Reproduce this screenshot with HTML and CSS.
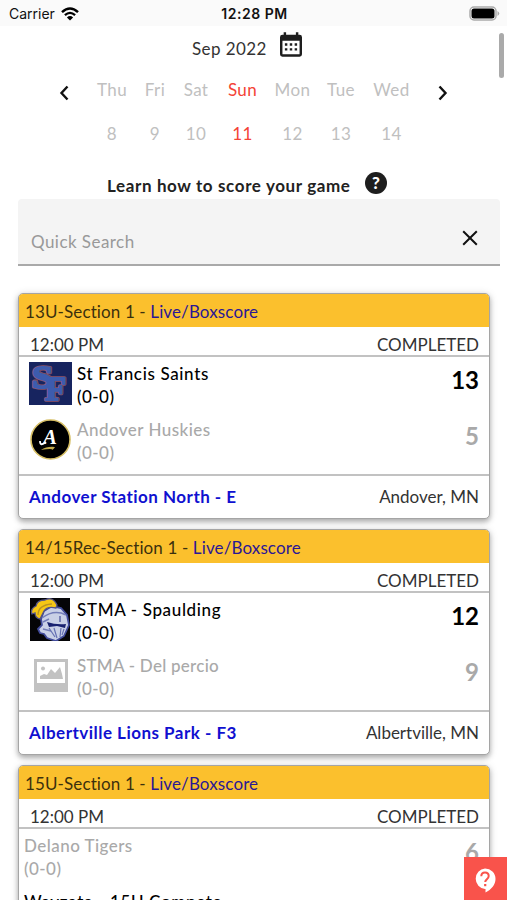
FILE: index.html
```html
<!DOCTYPE html>
<html lang="en">
<head>
  <meta charset="utf-8">
  <title>Scores</title>
  <link rel="stylesheet" href="styles.css">
</head>
<body>

  <header class="status-bar">
    <div class="carrier">
      <span>Carrier</span>
      <svg class="wifi" viewBox="0 0 18 14">
        <path d="M1 5.2 Q9 -2.2 17 5.2" fill="none" stroke="#000" stroke-width="2.5"/>
        <path d="M3.9 8.2 Q9 3.6 14.1 8.2" fill="none" stroke="#000" stroke-width="2.3"/>
        <path d="M5.9 10.4 Q9 7.6 12.1 10.4 L9 13.6 Z"/>
      </svg>
    </div>
    <b class="clock">12:28 PM</b>
    <svg class="battery" viewBox="0 0 31 15">
      <rect x="1" y="1" width="26" height="13" rx="4" fill="#fff" stroke="#aaa" stroke-width="1.5"/>
      <rect x="2.5" y="2.5" width="23" height="10" rx="2.5"/>
      <path d="M28.5 5 Q32 7.5 28.5 10 Z" fill="#aaa"/>
    </svg>
  </header>

  <main>
    <div class="month">
      <span>Sep 2022</span>
      <svg class="calendar" viewBox="3 1 18 20">
        <path fill="#1e1e1e" d="M19 3h-1V1h-2v2H8V1H6v2H5a2 2 0 0 0-2 2v14a2 2 0 0 0 2 2h14a2 2 0 0 0 2-2V5a2 2 0 0 0-2-2m0 16H5V8h14zM7 10h2v2H7zm4 0h2v2h-2zm4 0h2v2h-2zM7 14h2v2H7zm4 0h2v2h-2zm4 0h2v2h-2z"/>
      </svg>
    </div>

    <div class="week">
      <svg class="arrow" viewBox="0 0 10 16"><path d="M8.5 1.5 2.5 8l6 6.5"/></svg>
      <div class="days">
        <span>Thu</span><span>Fri</span><span>Sat</span><span class="today">Sun</span><span>Mon</span><span>Tue</span><span>Wed</span>
        <span>8</span><span>9</span><span>10</span><span class="today">11</span><span>12</span><span>13</span><span>14</span>
      </div>
      <svg class="arrow" viewBox="0 0 10 16"><path d="M1.5 1.5 7.5 8l-6 6.5"/></svg>
    </div>

    <div class="learn">
      <b>Learn how to score your game</b>
      <span class="help">?</span>
    </div>

    <div class="search">
      <span>Quick Search</span>
      <svg class="clear" viewBox="0 0 16 16"><path d="M1.2 1.2 14.8 14.8M14.8 1.2 1.2 14.8"/></svg>
    </div>

    <section class="card">
      <div class="division"><span>13U-Section 1 -</span> <a>Live/Boxscore</a></div>
      <div class="info"><span>12:00 PM</span><span class="state">COMPLETED</span></div>
      <div class="teams">
        <div class="team winner">
          <svg class="logo" viewBox="0 0 43 43">
            <rect width="43" height="43" fill="#17245f"/>
            <g fill="#3d5cae" stroke-linejoin="round" font-family="Liberation Serif" font-weight="bold">
              <g stroke="#8a5266" stroke-width="3.6">
                <text x="3" y="26" font-size="32" textLength="21" lengthAdjust="spacingAndGlyphs">S</text>
                <text x="16" y="38" font-size="33" textLength="21" lengthAdjust="spacingAndGlyphs">F</text>
              </g>
              <g stroke="#3d5cae" stroke-width="2">
                <text x="3" y="26" font-size="32" textLength="21" lengthAdjust="spacingAndGlyphs">S</text>
                <text x="16" y="38" font-size="33" textLength="21" lengthAdjust="spacingAndGlyphs">F</text>
              </g>
            </g>
          </svg>
          <div class="name"><span class="wide">St Francis Saints</span><br>(0-0)</div>
          <div class="score">13</div>
        </div>
        <div class="team">
          <svg class="logo" viewBox="0 0 43 43">
            <circle cx="21.5" cy="21.5" r="19.5" stroke="#d5bd62" stroke-width="1.6"/>
            <text x="14" y="26" fill="#fff" font-family="Liberation Serif" font-size="21" font-style="italic" font-weight="bold">A</text>
            <path d="M11 23q0 6 6 1" fill="none" stroke="#fff" stroke-width="1.8"/>
            <path d="M12 32q6-4 14-3-1 2-3 3 1-2-11 0" fill="#c4ab4c"/>
          </svg>
          <div class="name">Andover Huskies<br>(0-0)</div>
          <div class="score">5</div>
        </div>
      </div>
      <div class="venue"><b>Andover Station North - E</b><span>Andover, MN</span></div>
    </section>

    <section class="card">
      <div class="division"><span>14/15Rec-Section 1 -</span> <a>Live/Boxscore</a></div>
      <div class="info"><span>12:00 PM</span><span class="state">COMPLETED</span></div>
      <div class="teams">
        <div class="team winner">
          <svg class="logo" viewBox="0 0 43 43">
            <rect x="1" width="40" height="43" fill="#050507"/>
            <path d="M12 21 15 13l8-5 9 2 6 7 2 10-5 11-8 5-9-3-3-4-4-1-2-4 4-4z" fill="#c9d0e6" stroke="#414b9a" stroke-width="1.8"/>
            <path d="M13 20q12-9 24-3M14 24l6-3M14 31l8 2" fill="none" stroke="#737db9" stroke-width="1.5"/>
            <path d="M18 24q9 3 19 2l-1 4-8-2-8 1z" fill="#192270"/>
            <path d="m20 30 6 9m-1-9 3 10m4-10-1 9m4-8-2 6" stroke="#6671b3" stroke-width="1.2"/>
            <path d="M31 18v6" stroke="#283286"/>
            <path d="M3 16Q1 11 7 8 8 2 16 2q8-4 12 5l-1 3q-9-2-12 3l-4 8q-5-1-5-6z" fill="#f5c615" stroke="#525387" stroke-width="1.3"/>
            <path d="M9 17Q9 7 23 6" fill="none" stroke="#b99420" stroke-width="1.3"/>
          </svg>
          <div class="name"><span class="wide">STMA - Spaulding</span><br>(0-0)</div>
          <div class="score">12</div>
        </div>
        <div class="team">
          <svg class="logo" viewBox="0 0 43 43">
            <path d="M5 5h34v33H5zm3 3v21h28V8z" fill="#c2c2c2" fill-rule="evenodd"/>
            <circle cx="14" cy="14.5" r="2" fill="#c2c2c2"/>
            <path d="M11 25v-3l4-2 3 1 4-6 4 4 5-6 2 7 1 5z" fill="#c2c2c2"/>
          </svg>
          <div class="name"><span class="narrow">STMA - Del percio</span><br>(0-0)</div>
          <div class="score">9</div>
        </div>
      </div>
      <div class="venue"><b>Albertville Lions Park - F3</b><span>Albertville, MN</span></div>
    </section>

    <section class="card">
      <div class="division"><span>15U-Section 1 -</span> <a>Live/Boxscore</a></div>
      <div class="info"><span>12:00 PM</span><span class="state">COMPLETED</span></div>
      <div class="teams no-logos">
        <div class="team">
          <div class="name">Delano Tigers<br>(0-0)</div>
          <div class="score">6</div>
        </div>
        <div class="team winner">
          <div class="name"><span class="wide">Wayzata - 15U Compete</span></div>
        </div>
      </div>
    </section>
  </main>

  <div class="scroll-thumb"></div>
  <div class="support">
    <svg viewBox="0 0 22 25">
      <path d="M11 .5A10.3 10.3 0 0 0 11 21h.5v3.5C17.5 21.5 21.5 16.5 21.5 11A10.4 10.4 0 0 0 11 .5" fill="#fff"/>
      <path d="M7.3 8.3c0-5 7.4-4.8 7.4-.2 0 3-3.5 3.3-3.5 6" fill="none" stroke="#f9534b" stroke-width="2"/>
      <path d="M10.1 16h2.2v2.2h-2.2z" fill="#f9534b"/>
    </svg>
  </div>

</body>
</html>
```
FILE: styles.css
```css
* {
  box-sizing: border-box;
}

body {
  margin: 0;
  height: 900px;
  overflow: hidden;
  position: relative;
  background: #fff;
  color: #333;
  font-family: Lato, "Open Sans", sans-serif;
  font-size: 17px;
  line-height: 23px;
}

main {
  height: 874px;
  overflow: hidden;
}

.status-bar {
  display: grid;
  grid-template-columns: 1fr auto 1fr;
  align-items: center;
  height: 26px;
  padding: 1px 7px 0 9px;
  background: #fafafa;
  color: #111;
  font-family: Inter, sans-serif;
  font-size: 14px;
}

.carrier {
  display: flex;
  align-items: center;
  gap: 6px;
}

.wifi {
  width: 18px;
  height: 14px;
}

.clock {
  font-weight: 600;
  letter-spacing: .5px;
}

.battery {
  width: 31px;
  height: 15px;
  justify-self: end;
}

.month {
  display: flex;
  align-items: center;
  height: 45px;
  padding: 0 0 8px 192px;
}

.month span {
  width: 88px;
  padding-top: 8px;
  letter-spacing: .4px;
  white-space: nowrap;
}

.calendar {
  width: 22px;
  height: 25px;
}

.week {
  display: flex;
  height: 98px;
  padding: 7px 0 0 59px;
}

.arrow {
  width: 10px;
  height: 16px;
  margin-top: 7px;
}

.arrow path {
  fill: none;
  stroke: #111;
  stroke-width: 2.4;
}

.days {
  display: grid;
  grid-template-columns: 48px 38px 44px 49px 51px 46px 55px;
  grid-template-rows: 44px 44px;
  margin: 0 19px;
  color: #c0c0c0;
  letter-spacing: .4px;
  text-align: center;
}

.days .today {
  color: #f44336;
}

.learn {
  display: flex;
  height: 30px;
  padding: 5px 0 0 107px;
  color: #222;
}

.learn b {
  width: 258px;
  letter-spacing: .62px;
  white-space: nowrap;
}

.help {
  width: 22px;
  height: 22px;
  margin-top: -2px;
  border-radius: 50%;
  background: #1e1e1e;
  color: #fff;
  font-weight: 900;
  line-height: 22px;
  text-align: center;
}

.search {
  display: flex;
  justify-content: space-between;
  height: 67px;
  margin: 0 7px 27px 18px;
  padding: 31px 22px 0 13px;
  border-bottom: 2px solid #a9a9a9;
  border-radius: 4px 4px 0 0;
  background: #f4f4f4;
  color: #999;
  letter-spacing: .45px;
}

.clear {
  width: 16px;
  height: 16px;
}

.clear path {
  stroke: #111;
  stroke-width: 2;
}

.card {
  width: 472px;
  height: 226px;
  margin: 0 0 10px 18px;
  border: 1px solid #a5a5a5;
  border-radius: 5px;
  background: #fff;
  box-shadow: 0 3px 5px rgba(0, 0, 0, .25), 0 1px 9px rgba(0, 0, 0, .14);
  overflow: hidden;
}

.division {
  height: 33px;
  padding: 6px 6px 0;
  background: #fbc02d;
  color: #3b300d;
  letter-spacing: .12px;
  white-space: nowrap;
}

.division a {
  color: #2b1795;
}

.info {
  display: flex;
  justify-content: space-between;
  height: 30px;
  padding: 6px 10px 0 11px;
  border-bottom: 2px solid #c2c2c2;
}

.teams {
  height: 117px;
  padding: 5px 10px 0;
}

.team {
  display: flex;
  height: 56px;
  color: #a9a9a9;
}

.winner {
  color: #000;
}

.logo {
  width: 43px;
  height: 43px;
  margin-right: 5px;
}

.name {
  flex: 1;
  font-weight: 500;
  letter-spacing: .45px;
  white-space: nowrap;
}

.wide {
  letter-spacing: .65px;
}

.narrow {
  letter-spacing: .25px;
}

.score {
  padding-top: 6px;
  font-size: 24px;
  font-weight: 700;
}

.no-logos {
  padding-left: 5px;
}

.venue {
  display: flex;
  justify-content: space-between;
  height: 44px;
  padding: 9px 10px 0;
  border-top: 2px solid #c2c2c2;
}

.venue b {
  color: #1010d0;
  letter-spacing: .48px;
}

.scroll-thumb {
  position: absolute;
  top: 33px;
  right: 3px;
  width: 5px;
  height: 45px;
  border-radius: 3px;
  background: #aaa;
}

.support {
  position: absolute;
  right: 0;
  bottom: 0;
  width: 43px;
  height: 43px;
  padding: 11px 0 0 10px;
  background: #f9534b;
}

.support svg {
  display: block;
  width: 22px;
  height: 25px;
}
```
